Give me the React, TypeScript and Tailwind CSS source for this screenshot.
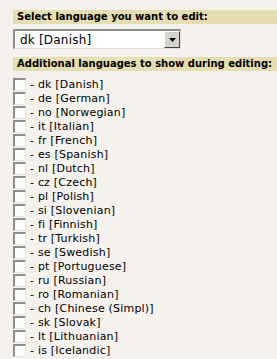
import { useState } from "react";

const languages = [
  ["dk", "Danish"],
  ["de", "German"],
  ["no", "Norwegian"],
  ["it", "Italian"],
  ["fr", "French"],
  ["es", "Spanish"],
  ["nl", "Dutch"],
  ["cz", "Czech"],
  ["pl", "Polish"],
  ["si", "Slovenian"],
  ["fi", "Finnish"],
  ["tr", "Turkish"],
  ["se", "Swedish"],
  ["pt", "Portuguese"],
  ["ru", "Russian"],
  ["ro", "Romanian"],
  ["ch", "Chinese (Simpl)"],
  ["sk", "Slovak"],
  ["lt", "Lithuanian"],
  ["is", "Icelandic"],
];

function Header({ children }: { children: React.ReactNode }) {
  return (
    <div className="h-[14px] bg-[#e6ddb2] pl-[4px] flex items-center text-[10px] font-bold text-black leading-none">
      {children}
    </div>
  );
}

function Checkbox({ checked, onClick }: { checked: boolean; onClick: () => void }) {
  return (
    <div
      onClick={onClick}
      className="w-[13px] h-[13px] shrink-0 bg-[#fcfcfc] border-t-2 border-l-2 border-[#8c8c8c] border-r border-b border-r-[#e4e4e4] border-b-[#e4e4e4] flex items-center justify-center text-[9px] leading-none"
    >
      {checked ? "✓" : ""}
    </div>
  );
}

export default function App() {
  const [checked, setChecked] = useState<Record<string, boolean>>({});

  return (
    <div
      className="min-h-screen bg-[#f5f2ee] pl-[13px] pt-[10px] text-[11px] text-black"
      style={{ fontFamily: '"DejaVu Sans", Verdana, sans-serif' }}
    >
      {/* Select language */}
      <Header>Select language you want to edit:</Header>

      <div className="mt-[5px] w-[168px] h-[20px] flex bg-white border-t-2 border-l-2 border-t-[#8c8c8c] border-l-[#8c8c8c] border-r border-b border-r-[#dcdcdc] border-b-[#dcdcdc]">
        <div className="flex-1 flex items-center pl-[5px] text-[12px] tracking-[0.2px] leading-none">
          dk [Danish]
        </div>
        <div className="w-[16px] h-full bg-[#d6d3ce] border-t border-l border-white border-r border-b border-r-[#404040] border-b-[#404040] flex items-center justify-center">
          <svg width="7" height="4" viewBox="0 0 7 4">
            <path d="M0 0h7L3.5 4z" fill="#000" />
          </svg>
        </div>
      </div>

      {/* Additional languages */}
      <div className="mt-[8px]">
        <Header>Additional languages to show during editing:</Header>
      </div>

      <div className="mt-[6px] flex flex-col">
        {languages.map(([code, name]) => (
          <div key={code} className="h-[14px] flex items-center gap-[4px]">
            <Checkbox
              checked={!!checked[code]}
              onClick={() => setChecked({ ...checked, [code]: !checked[code] })}
            />
            <span className="leading-none whitespace-nowrap text-[11px] tracking-[0.2px]">
              - {code} [{name}]
            </span>
          </div>
        ))}
      </div>
    </div>
  );
}
